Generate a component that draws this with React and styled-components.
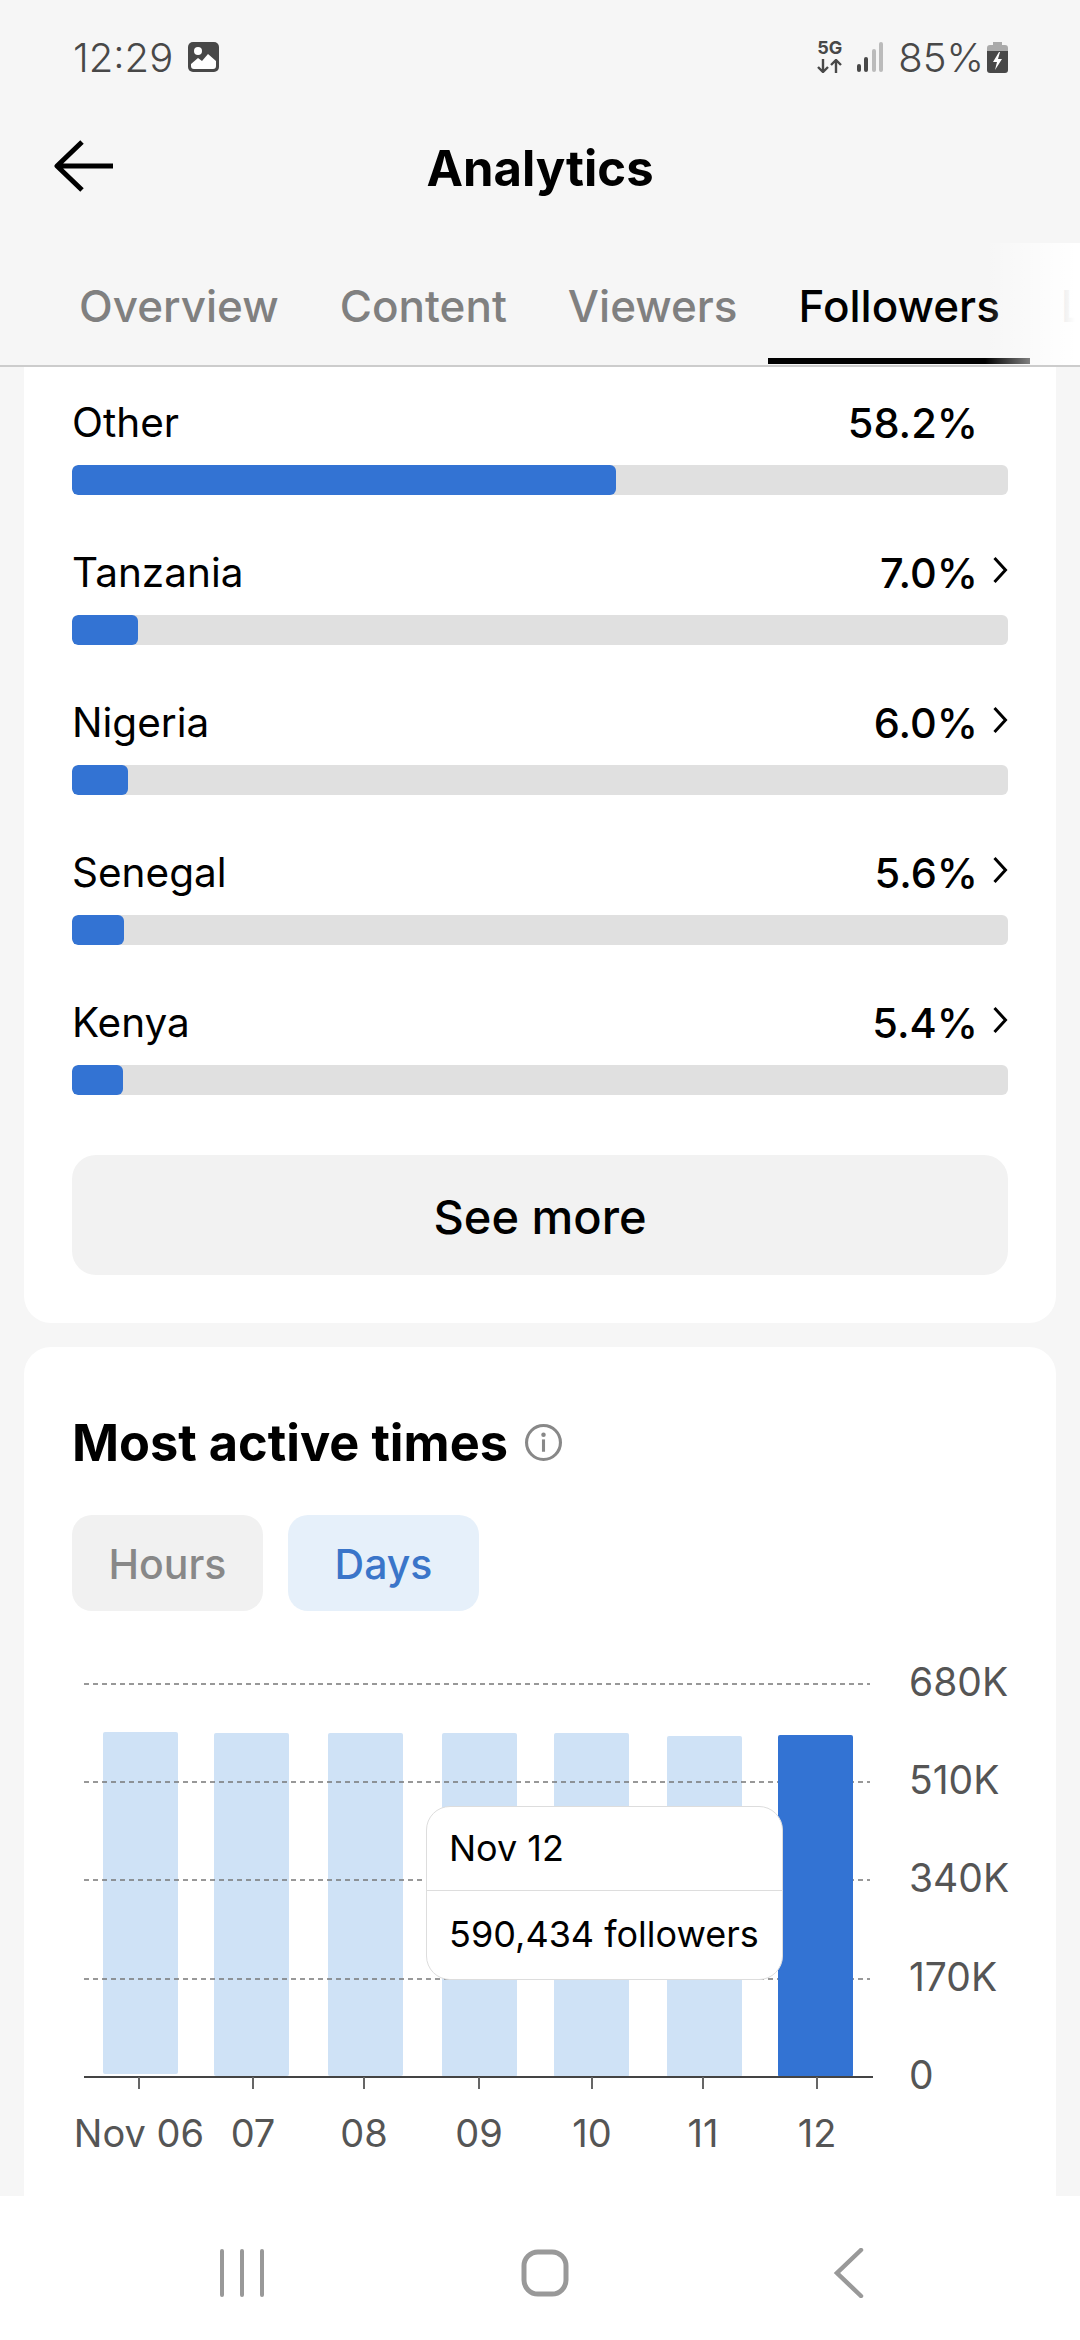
import React from "react";
import styled, { createGlobalStyle } from "styled-components";

const countries = [
  { name: "Other", value: "58.2%", width: 544 },
  { name: "Tanzania", value: "7.0%", width: 66, link: true },
  { name: "Nigeria", value: "6.0%", width: 56, link: true },
  { name: "Senegal", value: "5.6%", width: 52, link: true },
  { name: "Kenya", value: "5.4%", width: 51, link: true },
];

const tabs = ["Overview", "Content", "Viewers", "Followers", "LIVE"];

// chart is drawn in page coordinates, see viewBox below
const bars = [
  { x: 103, top: 1732, bottom: 2074, tick: 139, label: "Nov 06" },
  { x: 214, top: 1733, bottom: 2076, tick: 253, label: "07" },
  { x: 328, top: 1733, bottom: 2076, tick: 364, label: "08" },
  { x: 442, top: 1733, bottom: 2077, tick: 479, label: "09" },
  { x: 554, top: 1733, bottom: 2077, tick: 592, label: "10" },
  { x: 667, top: 1736, bottom: 2077, tick: 703, label: "11" },
  { x: 778, top: 1735, bottom: 2077, tick: 817, label: "12", active: true },
];

const grid = [
  { y: 1684, label: "680K" },
  { y: 1782, label: "510K" },
  { y: 1880, label: "340K" },
  { y: 1979, label: "170K" },
];

const App = () => {
  return (
    <Page>
      <GlobalStyle />
      <StatusBar>
        <StatusGroup>
          <Clock>12:29</Clock>
          <svg width="31" height="30" viewBox="0 0 31 30">
            <rect width="31" height="30" rx="5" fill="#484848" />
            <circle cx="10" cy="9" r="4" fill="#fff" />
            <path
              d="M3 22l7-6 4 3 6-7 8 7v5a3 3 0 0 1-3 3H6a3 3 0 0 1-3-3z"
              fill="#fff"
            />
          </svg>
        </StatusGroup>
        <StatusGroup>
          <NetworkIcon>
            <NetworkLabel>5G</NetworkLabel>
            <svg width="25" height="14" viewBox="0 0 25 14">
              <path
                d="M6 0v13M1 8l5 5 5-5M19 14V1M14 6l5-5 5 5"
                fill="none"
                stroke="#484848"
                strokeWidth="2.4"
              />
            </svg>
          </NetworkIcon>
          <svg width="26" height="30" viewBox="0 0 26 30">
            <rect x="0" y="22" width="4" height="8" rx="2" fill="#484848" />
            <rect x="7" y="15" width="4" height="15" rx="2" fill="#484848" />
            <rect x="15" y="7" width="4" height="23" rx="2" fill="#bbb" />
            <rect x="22" y="0" width="4" height="30" rx="2" fill="#bbb" />
          </svg>
          <BatteryText>85%</BatteryText>
          <svg width="21" height="31" viewBox="0 0 21 31">
            <path
              d="M6 0h9v3h3a3 3 0 0 1 3 3v3H0V6a3 3 0 0 1 3-3h3z"
              fill="#aaa"
            />
            <path
              d="M0 9h21v19a3 3 0 0 1-3 3H3a3 3 0 0 1-3-3z"
              fill="#484848"
            />
            <path d="M12 10l-6 10h4l-2 8 7-11h-4l2-7z" fill="#fff" />
          </svg>
        </StatusGroup>
      </StatusBar>

      <Header>
        <BackArrow width="60" height="52" viewBox="0 0 60 52">
          <path
            d="M28 2L3 26l25 24M3 26h56"
            fill="none"
            stroke="#000"
            strokeWidth="5"
            strokeLinejoin="round"
          />
        </BackArrow>
        <Title>Analytics</Title>
      </Header>

      <TabStrip>
        {tabs.map((tab) => (
          <Tab key={tab} $active={tab === "Followers"}>
            {tab}
          </Tab>
        ))}
        <TabFade />
      </TabStrip>

      <Content>
        <TopCard>
          {countries.map((c) => (
            <Country key={c.name}>
              <CountryHead>
                <span>{c.name}</span>
                <CountryValue>
                  {c.value}
                  {c.link && (
                    <svg width="16" height="28" viewBox="0 0 16 28">
                      <path
                        d="M2.5 2l11 12-11 12"
                        fill="none"
                        stroke="#000"
                        strokeWidth="3"
                      />
                    </svg>
                  )}
                </CountryValue>
              </CountryHead>
              <Track>
                <Fill style={{ width: c.width }} />
              </Track>
            </Country>
          ))}
          <SeeMore>See more</SeeMore>
        </TopCard>

        <ChartCard>
          <CardTitle>
            Most active times
            <svg width="37" height="37" viewBox="0 0 36 36">
              <circle cx="18" cy="18" r="16.5" fill="none" stroke="#888" strokeWidth="3" />
              <circle cx="18" cy="10.5" r="2.2" fill="#888" />
              <rect x="16.5" y="15" width="3" height="12" fill="#888" />
            </svg>
          </CardTitle>
          <Toggle>
            <ToggleButton>Hours</ToggleButton>
            <ToggleButton $active>Days</ToggleButton>
          </Toggle>
          <Chart>
            <svg width="960" height="500" viewBox="72 1660 960 500">
              {bars
                .filter((b) => !b.active)
                .map((b) => (
                  <rect
                    key={b.label}
                    x={b.x}
                    y={b.top}
                    width="75"
                    height={b.bottom - b.top}
                    rx="2"
                    fill="#cfe2f6"
                  />
                ))}
              {grid.map((g) => (
                <g key={g.label}>
                  <line
                    x1="84"
                    x2="870"
                    y1={g.y}
                    y2={g.y}
                    stroke="#777"
                    strokeWidth="1.5"
                    strokeDasharray="5 4"
                  />
                  <AxisText x="909" y={g.y + 12}>
                    {g.label}
                  </AxisText>
                </g>
              ))}
              <AxisText x="909" y="2089">
                0
              </AxisText>
              {bars
                .filter((b) => b.active)
                .map((b) => (
                  <rect
                    key={b.label}
                    x={b.x}
                    y={b.top}
                    width="75"
                    height={b.bottom - b.top}
                    rx="2"
                    fill="#3373d3"
                  />
                ))}
              <line x1="84" x2="873" y1="2077" y2="2077" stroke="#444" strokeWidth="2" />
              {bars.map((b) => (
                <g key={b.label}>
                  <line
                    x1={b.tick}
                    x2={b.tick}
                    y1="2077"
                    y2="2089"
                    stroke="#666"
                    strokeWidth="2"
                  />
                  <TickText x={b.tick} y="2147" textAnchor="middle">
                    {b.label}
                  </TickText>
                </g>
              ))}
            </svg>
            <Tooltip>
              <TooltipRow>Nov 12</TooltipRow>
              <TooltipRow $divided>590,434 followers</TooltipRow>
            </Tooltip>
          </Chart>
        </ChartCard>
      </Content>

      <NavBar>
        <svg width="60" height="48" viewBox="0 0 60 48">
          <path d="M10 2v44M30 2v44M50 2v44" stroke="#999" strokeWidth="4" strokeLinecap="round" />
        </svg>
        <svg width="60" height="48" viewBox="0 0 60 48">
          <rect x="9" y="3" width="42" height="42" rx="14" fill="none" stroke="#999" strokeWidth="5" />
        </svg>
        <svg width="60" height="50" viewBox="0 0 60 50">
          <path d="M43 2L19 25l24 23" fill="none" stroke="#999" strokeWidth="4.5" strokeLinecap="round" />
        </svg>
      </NavBar>
    </Page>
  );
};

export default App;

const GlobalStyle = createGlobalStyle`
  html, body {
    margin: 0;
    padding: 0;
    background: #f6f6f6;
  }
  * {
    box-sizing: border-box;
  }
`;

const Page = styled.div`
  width: 1080px;
  height: 2340px;
  display: flex;
  flex-direction: column;
  overflow: hidden;
  background: #f6f6f6;
  color: #000;
  font-family: Inter, "Liberation Sans", sans-serif;
`;

const StatusBar = styled.div`
  height: 114px;
  flex: none;
  padding: 0 72px 0 73px;
  display: flex;
  align-items: center;
  justify-content: space-between;
`;

const StatusGroup = styled.div`
  display: flex;
  align-items: center;
  gap: 15px;
`;

const Clock = styled.span`
  font-size: 40px;
  font-weight: 300;
  color: #484848;
`;

const NetworkIcon = styled.div`
  width: 25px;
  display: flex;
  flex-direction: column;
  align-items: center;
  gap: 4px;
`;

const NetworkLabel = styled.span`
  font-size: 18px;
  line-height: 14px;
  font-weight: 700;
  color: #484848;
`;

const BatteryText = styled.span`
  font-size: 40px;
  font-weight: 300;
  color: #484848;
  margin-right: -12px;
`;

const Header = styled.div`
  height: 129px;
  flex: none;
  padding-bottom: 21px;
  position: relative;
  display: flex;
  align-items: center;
  justify-content: center;
`;

const BackArrow = styled.svg`
  position: absolute;
  left: 54px;
  top: 26px;
`;

const Title = styled.h1`
  margin: 0;
  font-size: 49px;
  font-weight: 700;
`;

const TabStrip = styled.div`
  height: 124px;
  flex: none;
  padding-left: 48.5px;
  position: relative;
  display: flex;
  overflow: hidden;
  border-bottom: 2px solid #ccc;
`;

const Tab = styled.div`
  height: 121px;
  flex: none;
  padding: 11px 30.5px 0;
  display: flex;
  align-items: center;
  font-size: 44px;
  font-weight: 500;
  color: ${(p) => (p.$active ? "#000" : "#808080")};
  border-bottom: 6px solid ${(p) => (p.$active ? "#000" : "transparent")};
`;

const TabFade = styled.div`
  position: absolute;
  top: 0;
  bottom: 0;
  right: 0;
  width: 95px;
  background: linear-gradient(
    to right,
    rgba(255, 255, 255, 0) 0,
    rgba(255, 255, 255, 0.5) 45px,
    #fff 90px
  );
`;

const Content = styled.div`
  flex: 1;
  min-height: 0;
  padding: 0 24px;
  display: flex;
  flex-direction: column;
  gap: 24px;
  overflow: hidden;
`;

const TopCard = styled.div`
  flex: none;
  padding: 32px 48px 48px;
  background: #fff;
  border-radius: 0 0 27px 27px;
`;

const Country = styled.div`
  margin-bottom: 54px;
  &:nth-last-child(2) {
    margin-bottom: 60px;
  }
`;

const CountryHead = styled.div`
  height: 48px;
  margin-bottom: 18px;
  display: flex;
  align-items: center;
  justify-content: space-between;
  font-size: 40.5px;
  line-height: 48px;
`;

const CountryValue = styled.div`
  min-width: 160px;
  padding-right: 30px;
  position: relative;
  text-align: right;
  font-size: 41.5px;
  font-weight: 500;

  svg {
    position: absolute;
    right: 0;
    top: 7px;
  }
`;

const Track = styled.div`
  height: 30px;
  background: #e0e0e0;
  border-radius: 6px;
  overflow: hidden;
`;

const Fill = styled.div`
  height: 100%;
  background: #3373d3;
  border-radius: 6px;
`;

const SeeMore = styled.div`
  height: 120px;
  padding-top: 2px;
  display: flex;
  align-items: center;
  justify-content: center;
  background: #f2f2f2;
  border-radius: 24px;
  font-size: 47px;
  font-weight: 500;
`;

const ChartCard = styled.div`
  flex: 1;
  padding: 66px 48px 0;
  background: #fff;
  border-radius: 27px 27px 0 0;
`;

const CardTitle = styled.h2`
  margin: 0;
  height: 58px;
  display: flex;
  align-items: center;
  gap: 17px;
  font-size: 50.5px;
  font-weight: 700;
`;

const Toggle = styled.div`
  margin-top: 44px;
  display: flex;
  gap: 25px;
`;

const ToggleButton = styled.div`
  width: 191px;
  height: 96px;
  padding-top: 2px;
  display: flex;
  align-items: center;
  justify-content: center;
  border-radius: 20px;
  font-size: 41px;
  font-weight: 500;
  color: ${(p) => (p.$active ? "#3a75c9" : "#888")};
  background: ${(p) => (p.$active ? "#e6f0fa" : "#f1f1f1")};
`;

const Chart = styled.div`
  margin-top: 49px;
  position: relative;
  height: 500px;

  svg {
    display: block;
  }
`;

const AxisText = styled.text`
  font-size: 39px;
  fill: #555;
`;

const TickText = styled.text`
  font-size: 38px;
  fill: #555;
`;

const Tooltip = styled.div`
  position: absolute;
  left: 354px;
  top: 146px;
  width: 357px;
  height: 174px;
  background: #fff;
  border: 1px solid #ddd;
  border-radius: 24px;
`;

const TooltipRow = styled.div`
  height: ${(p) => (p.$divided ? "90px" : "83px")};
  padding: ${(p) => (p.$divided ? "0 0 3px 22px" : "0 0 1px 22px")};
  display: flex;
  align-items: center;
  font-size: 36px;
  border-top: ${(p) => (p.$divided ? "1px solid #ddd" : "none")};
`;

const NavBar = styled.div`
  height: 144px;
  flex: none;
  padding: 10px 0 0 212px;
  display: flex;
  align-items: center;
  gap: 243px;
  background: #fff;
`;
